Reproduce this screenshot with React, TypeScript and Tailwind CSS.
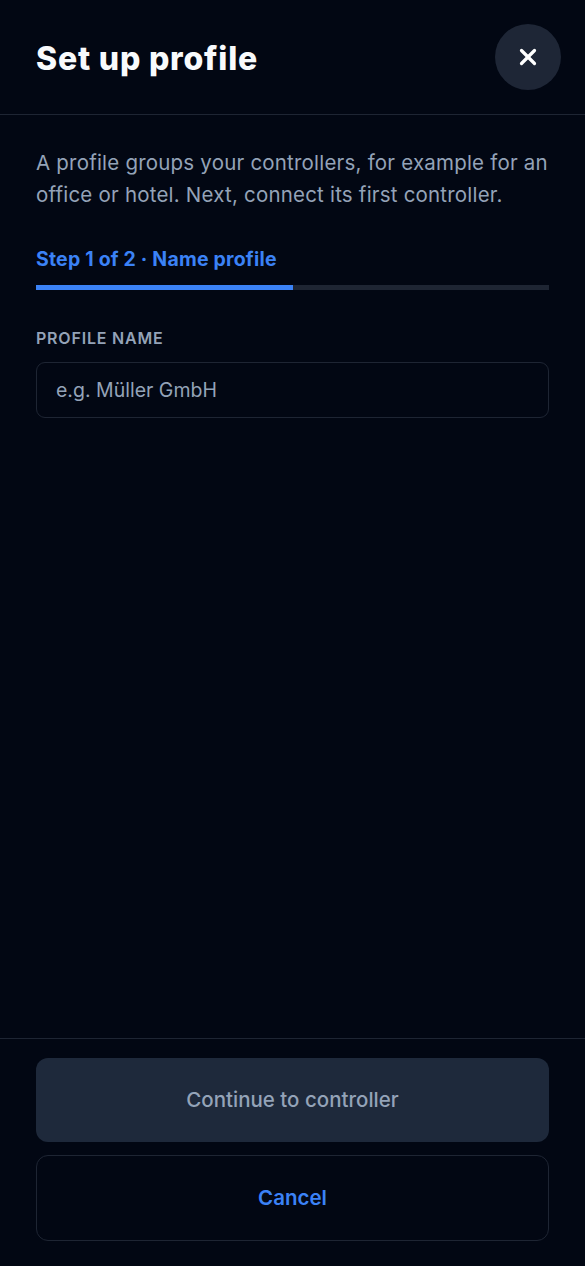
import React from 'react';
import { X } from 'lucide-react';

const App: React.FC = () => {
  return (
    <div
      className="flex flex-col w-[585px] h-[1266px] bg-[#020713] text-white"
      style={{ fontFamily: 'Inter, "Noto Sans", sans-serif' }}
    >
      {/* Header */}
      <div className="flex items-center justify-between h-[115px] pl-[36px] pr-[24px] border-b border-[#1e2533]">
        <h1 className="pt-[3px] text-[32px] leading-[40px] font-extrabold tracking-[0.025em] text-[#f8fafc]">Set up profile</h1>
        <button className="w-[66px] h-[66px] rounded-full bg-[#1e2636] flex items-center justify-center">
          <X className="w-[26px] h-[26px] text-white" strokeWidth={3} />
        </button>
      </div>

      {/* Body */}
      <div className="flex-1 px-[36px] pt-[32px]">
        <p className="text-[20.5px] leading-[32px] tracking-[0.01em] text-[#94a3b8]">
          A profile groups your controllers, for example for an office or hotel. Next, connect its first controller.
        </p>

        <div className="mt-[34px] text-[19.5px] leading-[28px] font-bold tracking-[0.01em] text-[#3b82f6]">Step 1 of 2 · Name profile</div>
        <div className="mt-[12px] h-[5px] w-full bg-[#1e2533] flex">
          <div className="w-1/2 h-full bg-[#3b82f6]" />
        </div>

        <label className="block mt-[38px] text-[16px] leading-[20px] font-semibold tracking-[0.05em] text-[#94a3b8] uppercase">
          Profile name
        </label>
        <input
          className="mt-[14px] w-full h-[56px] rounded-[9px] border border-[#1e2533] bg-transparent px-[19px] text-[19.5px] text-white placeholder:text-[#94a3b8] outline-none"
          placeholder="e.g. Müller GmbH"
        />
      </div>

      {/* Footer */}
      <div className="border-t border-[#1e2533] px-[36px] pt-[19px] pb-[25px] flex flex-col gap-[13px]">
        <button className="h-[84px] rounded-[12px] bg-[#1e293b] text-[20.5px] font-medium text-[#94a3b8]">
          Continue to controller
        </button>
        <button className="h-[86px] rounded-[12px] border border-[#1e2533] text-[20.5px] font-semibold text-[#3b82f6]">
          Cancel
        </button>
      </div>
    </div>
  );
};

export default App;
